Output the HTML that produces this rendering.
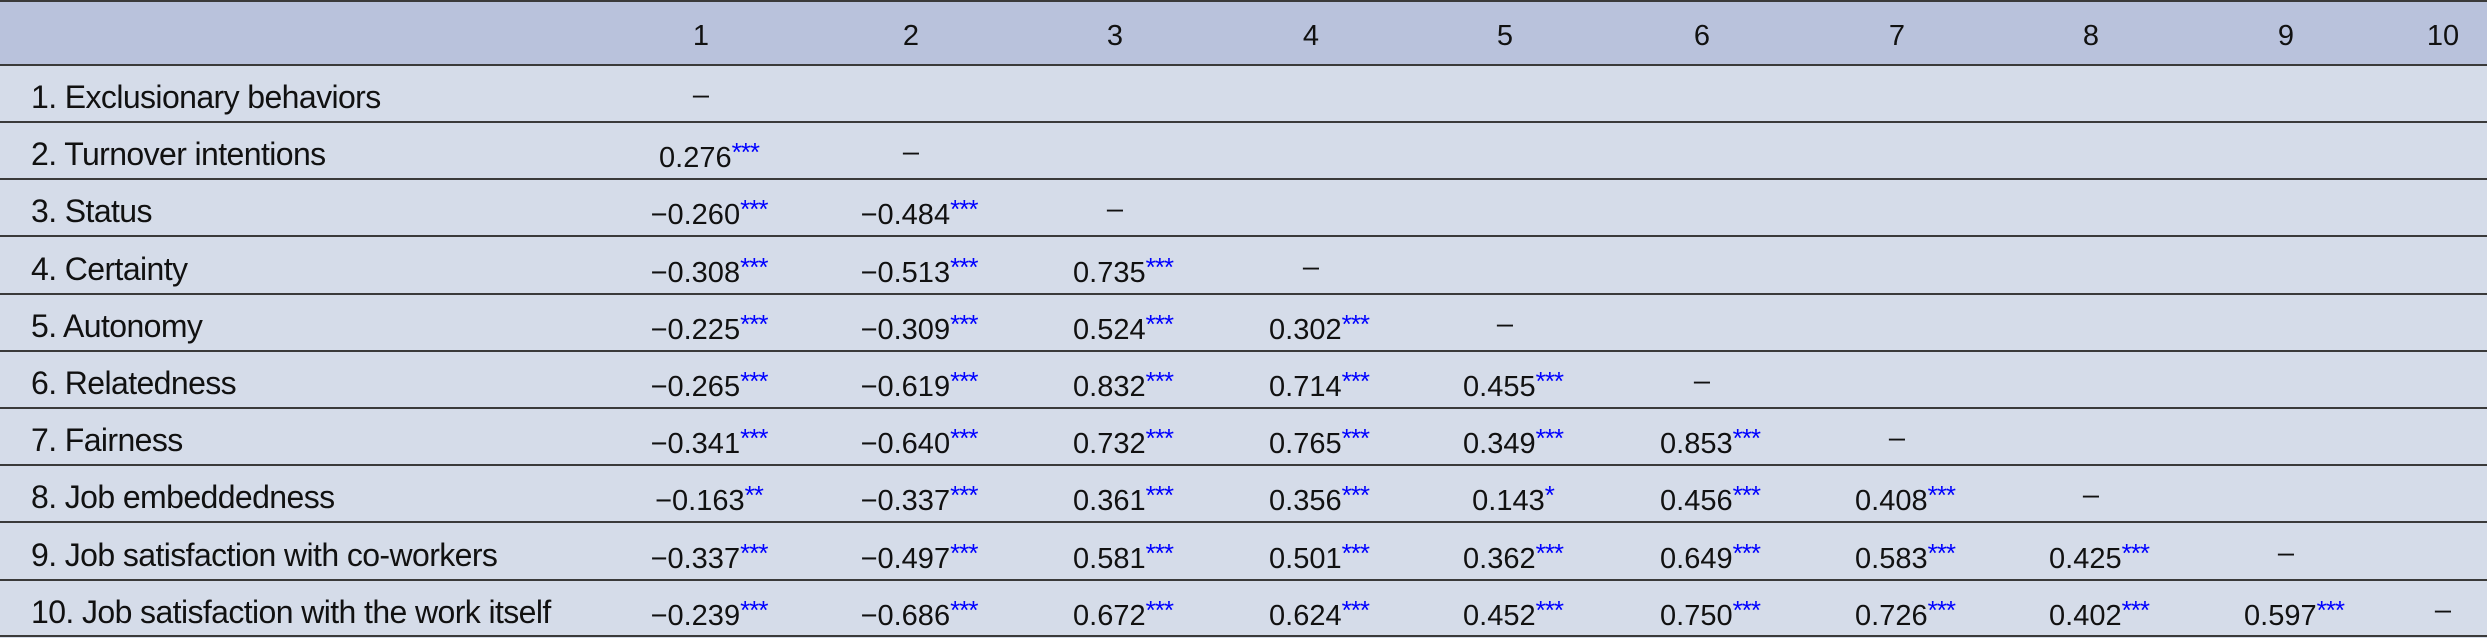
<!DOCTYPE html>
<html><head><meta charset="utf-8"><style>
body{margin:0;width:2487px;height:638px;background:#d5dce9;overflow:hidden;font-family:"Liberation Sans",sans-serif;color:#111;position:relative;}
.hd{position:absolute;left:0;top:0;width:2487px;height:65px;background:#b9c2dc;}
.ln{position:absolute;left:0;width:2487px;height:2px;background:#3a3a3a;}
.r{position:absolute;left:0;width:2487px;height:30px;}
.c{position:absolute;top:0;font-size:29px;white-space:nowrap;transform:translateX(-50%);line-height:30px;}
.l{position:absolute;top:2px;left:31px;font-size:32px;white-space:nowrap;line-height:30px;letter-spacing:-0.6px;}
s{text-decoration:none;color:#0000ff;font-size:26px;vertical-align:6px;letter-spacing:-1px;}
.a{left:709px}.b{left:919px}.d{left:1123px}.e{left:1319px}.f{left:1513px}.g{left:1710px}.h{left:1905px}.i{left:2099px}.j{left:2294px}
.a0{left:701px}.b0{left:911px}.d0{left:1115px}.e0{left:1311px}.f0{left:1505px}.g0{left:1702px}.h0{left:1897px}.i0{left:2091px}.j0{left:2286px}.k0{left:2443px}
</style></head><body>
<div class="hd"></div>
<div class="ln" style="top:0"></div>
<div class="ln" style="top:64px"></div>
<div class="ln" style="top:121px"></div>
<div class="ln" style="top:178px"></div>
<div class="ln" style="top:235px"></div>
<div class="ln" style="top:293px"></div>
<div class="ln" style="top:350px"></div>
<div class="ln" style="top:407px"></div>
<div class="ln" style="top:464px"></div>
<div class="ln" style="top:521px"></div>
<div class="ln" style="top:579px"></div>
<div class="ln" style="top:635px"></div>

<div class="r" style="top:21px">
<div class="c a0">1</div><div class="c b0">2</div><div class="c d0">3</div><div class="c e0">4</div><div class="c f0">5</div><div class="c g0">6</div><div class="c h0">7</div><div class="c i0">8</div><div class="c j0">9</div><div class="c k0">10</div>
</div>

<div class="r" style="top:80px"><div class="l">1. Exclusionary behaviors</div><div class="c a0">–</div></div>

<div class="r" style="top:137px"><div class="l">2. Turnover intentions</div><div class="c a">0.276<s>***</s></div><div class="c b0">–</div></div>

<div class="r" style="top:194px"><div class="l">3. Status</div><div class="c a">−0.260<s>***</s></div><div class="c b">−0.484<s>***</s></div><div class="c d0">–</div></div>

<div class="r" style="top:252px"><div class="l">4. Certainty</div><div class="c a">−0.308<s>***</s></div><div class="c b">−0.513<s>***</s></div><div class="c d">0.735<s>***</s></div><div class="c e0">–</div></div>

<div class="r" style="top:309px"><div class="l">5. Autonomy</div><div class="c a">−0.225<s>***</s></div><div class="c b">−0.309<s>***</s></div><div class="c d">0.524<s>***</s></div><div class="c e">0.302<s>***</s></div><div class="c f0">–</div></div>

<div class="r" style="top:366px"><div class="l">6. Relatedness</div><div class="c a">−0.265<s>***</s></div><div class="c b">−0.619<s>***</s></div><div class="c d">0.832<s>***</s></div><div class="c e">0.714<s>***</s></div><div class="c f">0.455<s>***</s></div><div class="c g0">–</div></div>

<div class="r" style="top:423px"><div class="l">7. Fairness</div><div class="c a">−0.341<s>***</s></div><div class="c b">−0.640<s>***</s></div><div class="c d">0.732<s>***</s></div><div class="c e">0.765<s>***</s></div><div class="c f">0.349<s>***</s></div><div class="c g">0.853<s>***</s></div><div class="c h0">–</div></div>

<div class="r" style="top:480px"><div class="l">8. Job embeddedness</div><div class="c a">−0.163<s>**</s></div><div class="c b">−0.337<s>***</s></div><div class="c d">0.361<s>***</s></div><div class="c e">0.356<s>***</s></div><div class="c f">0.143<s>*</s></div><div class="c g">0.456<s>***</s></div><div class="c h">0.408<s>***</s></div><div class="c i0">–</div></div>

<div class="r" style="top:538px"><div class="l">9. Job satisfaction with co-workers</div><div class="c a">−0.337<s>***</s></div><div class="c b">−0.497<s>***</s></div><div class="c d">0.581<s>***</s></div><div class="c e">0.501<s>***</s></div><div class="c f">0.362<s>***</s></div><div class="c g">0.649<s>***</s></div><div class="c h">0.583<s>***</s></div><div class="c i">0.425<s>***</s></div><div class="c j0">–</div></div>

<div class="r" style="top:595px"><div class="l">10. Job satisfaction with the work itself</div><div class="c a">−0.239<s>***</s></div><div class="c b">−0.686<s>***</s></div><div class="c d">0.672<s>***</s></div><div class="c e">0.624<s>***</s></div><div class="c f">0.452<s>***</s></div><div class="c g">0.750<s>***</s></div><div class="c h">0.726<s>***</s></div><div class="c i">0.402<s>***</s></div><div class="c j">0.597<s>***</s></div><div class="c k0">–</div></div>
</body></html>
